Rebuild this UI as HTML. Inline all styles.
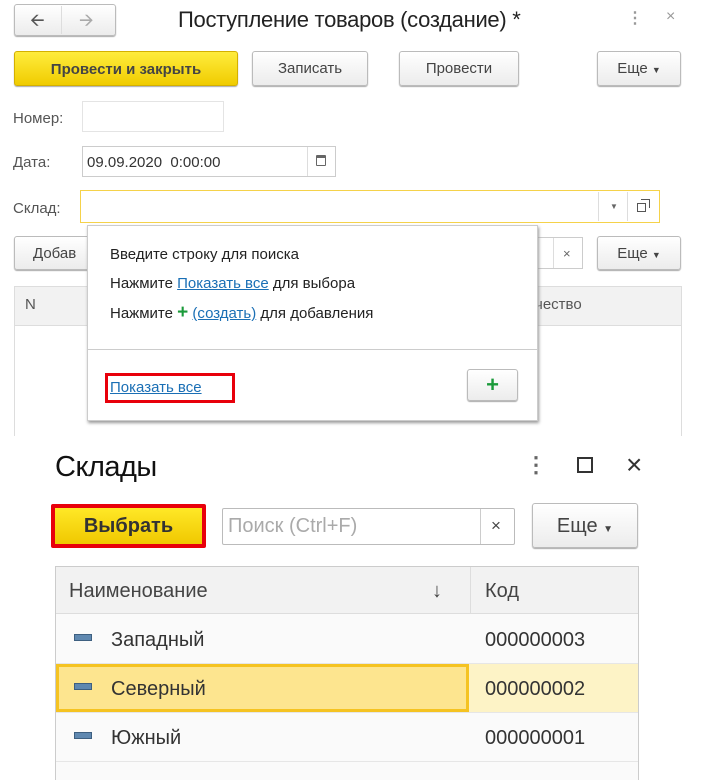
<!DOCTYPE html>
<html><head><meta charset="utf-8"><style>
*{box-sizing:border-box;margin:0;padding:0}
body{width:701px;height:780px;background:#fff;position:relative;overflow:hidden;font-family:"Liberation Sans",Arial,sans-serif;color:#333}
.a{position:absolute}
.btn{position:absolute;border:1px solid #bbb;border-radius:3px;background:linear-gradient(#fff,#ececec);box-shadow:0 1px 1px #aaa;font-size:15px;color:#444;text-align:center}
.lbl{position:absolute;font-size:15px;color:#555}
.inp{position:absolute;border:1px solid #ccc;background:#fff}
.t{font-size:15px;color:#333}
.lnk{color:#1a6fb5;text-decoration:underline}
</style></head><body>
<div class="btn" style="left:14px;top:4px;width:102px;height:32px;"></div>
<div class="a" style="left:61px;top:6px;width:1px;height:28px;background:#ddd"></div>
<div class="a" style="left:30px;top:8px;font-size:18px;color:#555">&#129128;</div>
<div class="a" style="left:79px;top:8px;font-size:18px;color:#aaa">&#129130;</div>
<div class="a" style="left:178px;top:7px;font-size:22px;color:#222;letter-spacing:-0.3px">Поступление товаров (создание) *</div>
<div class="a" style="left:627px;top:8px;font-size:16px;color:#999;font-weight:bold">⋮</div>
<div class="a" style="left:666px;top:8px;font-size:16px;color:#999">×</div>

<div class="btn" style="left:14px;top:51px;width:224px;height:35px;background:linear-gradient(#ffec3d,#f0cc00);border-color:#d4b000;font-weight:bold;color:#444;line-height:35px">Провести и закрыть</div>
<div class="btn" style="left:252px;top:51px;width:116px;height:35px;line-height:33px">Записать</div>
<div class="btn" style="left:399px;top:51px;width:120px;height:35px;line-height:33px">Провести</div>
<div class="btn" style="left:597px;top:51px;width:84px;height:35px;line-height:33px">Еще <span style="font-size:9px">▼</span></div>

<div class="lbl" style="left:13px;top:110px">Номер:</div>
<div class="inp" style="left:82px;top:101px;width:142px;height:31px;border-color:#e4e4e4"></div>
<div class="lbl" style="left:13px;top:154px">Дата:</div>
<div class="inp" style="left:82px;top:146px;width:254px;height:31px"></div>
<div class="a t" style="left:87px;top:154px;font-size:15px">09.09.2020&nbsp; 0:00:00</div>
<div class="a" style="left:307px;top:147px;width:1px;height:29px;background:#ddd"></div>
<div class="a" style="left:316px;top:155px;width:10px;height:11px;border:1.5px solid #666;border-top-width:3px;border-radius:1px"></div>
<div class="lbl" style="left:13px;top:200px">Склад:</div>
<div class="inp" style="left:80px;top:190px;width:580px;height:33px;border-color:#f5d24a"></div>
<div class="a" style="left:598px;top:192px;width:1px;height:29px;background:#ddd"></div>
<div class="a" style="left:627px;top:192px;width:1px;height:29px;background:#ddd"></div>
<div class="a" style="left:610px;top:202px;font-size:8px;color:#666">▼</div>
<div class="a" style="left:637px;top:203px;width:9px;height:9px;border:1.5px solid #555;background:#fff"></div>
<div class="a" style="left:641px;top:199px;width:9px;height:9px;border:1.5px solid #555;border-bottom:none;border-left:none"></div>

<div class="btn" style="left:14px;top:236px;width:90px;height:34px;line-height:34px;text-align:left;padding-left:18px">Добав</div>
<div class="inp" style="left:520px;top:237px;width:63px;height:32px"></div>
<div class="a" style="left:553px;top:238px;width:1px;height:30px;background:#ddd"></div>
<div class="a" style="left:563px;top:246px;font-size:13px;color:#666">×</div>
<div class="btn" style="left:597px;top:236px;width:84px;height:34px;line-height:34px">Еще <span style="font-size:9px">▼</span></div>

<div class="a" style="left:14px;top:286px;width:668px;height:150px;border:1px solid #ddd;border-bottom:none"></div>
<div class="a" style="left:15px;top:287px;width:666px;height:39px;background:#f2f2f2;border-bottom:1px solid #ddd"></div>
<div class="a t" style="left:25px;top:296px;color:#555">N</div>
<div class="a t" style="left:535px;top:296px;color:#555">чество</div>

<div class="a" style="left:87px;top:225px;width:451px;height:196px;background:#fff;border:1px solid #ccc;box-shadow:1px 2px 3px #999"></div>
<div class="a t" style="left:110px;top:246px;color:#222">Введите строку для поиска</div>
<div class="a t" style="left:110px;top:275px;color:#222">Нажмите <span class="lnk">Показать все</span> для выбора</div>
<div class="a t" style="left:110px;top:305px;color:#222">Нажмите <b style="color:#1a9a3a;font-size:19px;line-height:14px">+</b> <span class="lnk">(создать)</span> для добавления</div>
<div class="a" style="left:88px;top:349px;width:449px;height:1px;background:#ccc"></div>
<div class="a" style="left:105px;top:373px;width:130px;height:30px;border:3px solid #e8000b"></div>
<div class="a t lnk" style="left:110px;top:379px">Показать все</div>
<div class="btn" style="left:467px;top:369px;width:51px;height:32px;line-height:30px;color:#1a9a3a;font-size:22px;font-weight:bold">+</div>

<div class="a" style="left:55px;top:451px;font-size:29px;color:#111;letter-spacing:-0.5px">Склады</div>
<div class="a" style="left:525px;top:452px;font-size:22px;color:#666;font-weight:bold">⋮</div>
<div class="a" style="left:577px;top:457px;width:16px;height:16px;border:2px solid #333"></div>
<div class="a" style="left:626px;top:449px;font-size:28px;color:#333;font-weight:200">×</div>

<div class="a" style="left:51px;top:504px;width:155px;height:44px;border:4px solid #e8000b;border-radius:2px;background:linear-gradient(#ffe827,#f0c800);font-size:20px;font-weight:bold;color:#333;text-align:center;line-height:37px">Выбрать</div>
<div class="inp" style="left:222px;top:508px;width:293px;height:37px;border-color:#bbb;border-radius:2px"></div>
<div class="a" style="left:228px;top:515px;font-size:20px;color:#aaa">Поиск (Ctrl+F)</div>
<div class="a" style="left:480px;top:509px;width:1px;height:35px;background:#ccc"></div>
<div class="a" style="left:491px;top:516px;font-size:17px;color:#444">×</div>
<div class="btn" style="left:532px;top:503px;width:106px;height:45px;line-height:44px;font-size:20px">Еще <span style="font-size:10px">▼</span></div>

<div class="a" style="left:55px;top:566px;width:584px;height:214px;border:1px solid #ccc;border-bottom:none;background:#fafafa"></div>
<div class="a" style="left:56px;top:567px;width:582px;height:47px;background:#f2f2f2;border-bottom:1px solid #ddd"></div>
<div class="a" style="left:470px;top:567px;width:1px;height:47px;background:#ddd"></div>
<div class="a" style="left:69px;top:580px;font-size:20px;color:#444">Наименование</div>
<div class="a" style="left:432px;top:580px;font-size:20px;color:#444">↓</div>
<div class="a" style="left:485px;top:580px;font-size:20px;color:#444">Код</div>

<div class="a" style="left:56px;top:663px;width:582px;height:1px;background:#e6e6e6"></div>
<div class="a" style="left:56px;top:712px;width:582px;height:1px;background:#e6e6e6"></div>
<div class="a" style="left:56px;top:761px;width:582px;height:1px;background:#e6e6e6"></div>
<div class="a" style="left:56px;top:664px;width:413px;height:48px;background:#fde58f;border:3px solid #f5c321"></div>
<div class="a" style="left:469px;top:664px;width:169px;height:48px;background:#fdf3c6"></div>

<div class="a" style="left:74px;top:634px;width:18px;height:7px;background:#5f88b0;border:1px solid #3d5f80"></div>
<div class="a" style="left:74px;top:683px;width:18px;height:7px;background:#5f88b0;border:1px solid #3d5f80"></div>
<div class="a" style="left:74px;top:732px;width:18px;height:7px;background:#5f88b0;border:1px solid #3d5f80"></div>
<div class="a" style="left:111px;top:629px;font-size:20px;color:#333">Западный</div>
<div class="a" style="left:111px;top:678px;font-size:20px;color:#333">Северный</div>
<div class="a" style="left:111px;top:727px;font-size:20px;color:#333">Южный</div>
<div class="a" style="left:485px;top:629px;font-size:20px;color:#333">000000003</div>
<div class="a" style="left:485px;top:678px;font-size:20px;color:#333">000000002</div>
<div class="a" style="left:485px;top:727px;font-size:20px;color:#333">000000001</div>
</body></html>
